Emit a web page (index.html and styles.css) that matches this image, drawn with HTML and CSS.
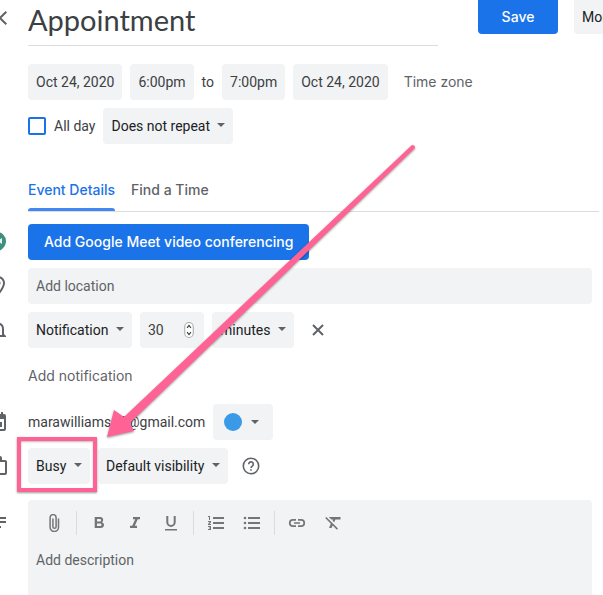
FILE: index.html
```html
<!DOCTYPE html>
<html lang="en">
<head>
<meta charset="utf-8">
<meta name="viewport" content="width=device-width, initial-scale=1">
<title>Appointment</title>
<link rel="stylesheet" href="styles.css">
</head>
<body>
<form class="page">
  <header class="row header">
    <div class="gutter gutter-close"><button type="button" class="icon-button" aria-label="Close"><svg class="icon" viewBox="0 0 24 24"><path d="M19 6.4 17.6 5 12 10.6 6.4 5 5 6.4l5.6 5.600L5 17.600 6.400 19l5.600-5.600 5.600 5.600 1.400-1.400-5.600-5.600z"/></svg></button></div>
    <input class="title" type="text" value="Appointment" aria-label="Title">
    <div class="actions">
      <button type="button" class="primary save">Save</button>
      <button type="button" class="more">More actions</button>
    </div>
  </header>

  <div class="row dates">
    <div class="gutter"></div>
    <div class="fields">
      <button type="button" class="chip">Oct 24, 2020</button>
      <button type="button" class="chip">6:00pm</button>
      <span>to</span>
      <button type="button" class="chip">7:00pm</button>
      <button type="button" class="chip">Oct 24, 2020</button>
      <button type="button" class="text-button zone">Time zone</button>
    </div>
  </div>

  <div class="row repeat">
    <div class="gutter"></div>
    <div class="fields">
      <label class="check"><input type="checkbox">All day</label>
      <span class="select"><select aria-label="Repeat"><option>Does not repeat</option></select></span>
    </div>
  </div>

  <div class="row">
    <div class="gutter"></div>
    <nav class="tabs">
      <a class="tab active" href="#details">Event Details</a>
      <a class="tab" href="#time">Find a Time</a>
    </nav>
  </div>

  <main class="details" id="details">
    <div class="row">
      <div class="gutter"><svg class="icon" viewBox="0 0 24 24"><path fill="#3d8f80" d="M11 2a9 9 0 0 1 9 9c0 4-2.500 7.500-6 9.500V20h-3a9 9 0 0 1 0-18z"/><path fill="#e8f3f1" d="M6 8h7v2l3-2v6l-3-2v2H6z"/></svg></div>
      <div class="fields"><button type="button" class="primary">Add Google Meet video conferencing</button></div>
    </div>

    <div class="row">
      <div class="gutter"><svg class="icon" viewBox="0 0 24 24"><path d="M12 2C8.100 2 5 5.100 5 9c0 5.200 7 13 7 13s7-7.800 7-13c0-3.900-3.100-7-7-7zm0 2a5 5 0 0 1 5 5c0 2.900-2.900 7.200-5 9.900C9.900 16.200 7 11.900 7 9a5 5 0 0 1 5-5z"/><circle cx="12" cy="9" r="2.500"/></svg></div>
      <input class="location" type="text" placeholder="Add location" aria-label="Location">
    </div>

    <div class="row">
      <div class="gutter"><svg class="icon" viewBox="0 0 24 24"><path d="M12 22a2 2 0 0 0 2-2h-4a2 2 0 0 0 2 2zm6-6v-5c0-3.100-1.600-5.600-4.500-6.300V4a1.500 1.500 0 0 0-3 0v.7C7.600 5.400 6 7.900 6 11v5l-2 2v1h16v-1zm-2 1H8v-6c0-2.500 1.500-4.500 4-4.500s4 2 4 4.500z"/></svg></div>
      <div class="fields">
        <span class="select"><select aria-label="Notification type"><option>Notification</option></select></span>
        <span class="amount">
          <input type="text" inputmode="numeric" value="30" aria-label="Notification time">
          <svg class="stepper" viewBox="0 0 9 15"><rect x=".5" y=".5" width="8" height="14" rx="4"/><path d="m2.700 5.500 1.800-2.300 1.800 2.300M2.700 9.500l1.800 2.300 1.800-2.300"/></svg>
        </span>
        <span class="select"><select aria-label="Notification unit"><option>minutes</option></select></span>
        <button type="button" class="icon-button remove" aria-label="Remove notification"><svg viewBox="0 0 12 12"><path d="m1 1 10 10M11 1 1 11"/></svg></button>
      </div>
    </div>

    <div class="row">
      <div class="gutter"></div>
      <div class="fields add"><button type="button" class="text-button">Add notification</button></div>
    </div>

    <div class="row">
      <div class="gutter"><svg class="icon" viewBox="0 0 24 24"><path d="M18 4h-1V2h-2v2H8V2H6v2H5a2 2 0 0 0-2 2v13a2 2 0 0 0 2 2h13a2 2 0 0 0 2-2V6a2 2 0 0 0-2-2zm0 15H5V9h13zM11 12h5v5h-5z"/></svg></div>
      <div class="fields">
        <span>marawilliams10@gmail.com</span>
        <button type="button" class="color" aria-label="Calendar color"><span class="dot"></span><span class="caret"></span></button>
      </div>
    </div>

    <div class="row">
      <div class="gutter"><svg class="icon" viewBox="0 0 24 24"><path d="M14 6V4h-4v2zM4 8v11h15V8zm15-2a2 2 0 0 1 2 2v11a2 2 0 0 1-2 2H4a2 2 0 0 1-2-2V8c0-1.100.9-2 2-2h4V4c0-1.100.9-2 2-2h4a2 2 0 0 1 2 2v2z"/></svg></div>
      <div class="fields">
        <span class="select marked"><select aria-label="Availability"><option>Busy</option></select></span>
        <span class="select"><select aria-label="Visibility"><option>Default visibility</option></select></span>
        <button type="button" class="icon-button help" aria-label="Help"><svg viewBox="0 0 18 18"><circle cx="9" cy="9" r="7.700"/><path d="M6.700 7.200a2.300 2.300 0 1 1 3.800 1.700C9.600 9.600 9 9.900 9 11"/><path d="M9 12.200v1.600"/></svg></button>
      </div>
    </div>

    <div class="row description">
      <div class="gutter"><svg class="icon" viewBox="0 0 24 24"><path d="M4 7h16v2H4zm0 4h16v2H4zm0 5h11v2H4z"/></svg></div>
      <div class="editor">
        <div class="toolbar">
          <button type="button" aria-label="Attach"><svg class="tool" viewBox="0 0 18 18"><path fill="none" stroke="#757575" stroke-width="1.500" d="M13.500 4.500v8.800a4.200 4.200 0 0 1-8.400 0V3.600a3 3 0 0 1 6 0v9.100a1.600 1.600 0 0 1-3.200 0V4.500"/></svg></button>
          <i class="divider"></i>
          <button type="button" aria-label="Bold"><svg class="tool" viewBox="0 0 18 18"><path d="M12 8.300a3 3 0 0 0 1.200-2.400C13.200 4.200 12 3 10.200 3H4.700v11h6c1.900 0 3.300-1.300 3.300-3.100 0-1.200-.8-2.100-2-2.600zM7 5h2.800a1.300 1.300 0 0 1 0 2.600H7zm3.200 7H7V9.400h3.200a1.300 1.300 0 0 1 0 2.600z"/></svg></button>
          <button type="button" aria-label="Italic"><svg class="tool" viewBox="0 0 18 18"><path d="M7 3v2.300h2.200l-3 6.400H4V14h7v-2.300H8.800l3-6.400H14V3z"/></svg></button>
          <button type="button" aria-label="Underline"><svg class="tool" viewBox="0 0 18 18"><path d="M9 13a4.700 4.700 0 0 0 4.700-4.700V2h-2v6.300a2.700 2.700 0 0 1-5.400 0V2h-2v6.300A4.700 4.700 0 0 0 9 13zm-6 2v1.600h12V15z"/></svg></button>
          <i class="divider"></i>
          <button type="button" aria-label="Numbered list"><svg class="tool" viewBox="0 0 18 18"><path d="M6 3h11v2H6zm0 5h11v2H6zm0 5h11v2H6zM1 2h2v4H2V3H1zm0 5h3v1.500L2.500 10H4v1H1v-1l1.700-2H1zm0 5h3v4H1v-1h2v-.5H2v-1h1V13H1z"/></svg></button>
          <button type="button" aria-label="Bulleted list"><svg class="tool" viewBox="0 0 18 18"><path d="M5 3h12v2H5zm0 5h12v2H5zm0 5h12v2H5z"/><circle cx="2" cy="4" r="1.300"/><circle cx="2" cy="9" r="1.300"/><circle cx="2" cy="14" r="1.300"/></svg></button>
          <i class="divider"></i>
          <button type="button" aria-label="Link"><svg class="tool" viewBox="0 0 18 18"><path d="M8 5H4.900a4 4 0 0 0 0 8H8v-1.700H4.900a2.300 2.300 0 0 1 0-4.600H8zm2 0v1.700h3.100a2.300 2.300 0 0 1 0 4.600H10V13h3.100a4 4 0 0 0 0-8zM6 8.200v1.600h6V8.200z"/></svg></button>
          <button type="button" aria-label="Remove formatting"><svg class="tool" viewBox="0 0 18 18"><path d="M5 3v.2L7.300 5.500H9l-.4 1.200L10.200 8.300l1.200-2.800h5.100V3zM2.300 3 1.200 4.100l5.600 5.600L5 14h2.500l1.200-2.500 4.200 4.200L14 14.600z"/></svg></button>
        </div>
        <textarea placeholder="Add description" aria-label="Description"></textarea>
      </div>
    </div>
  </main>
  <svg class="arrow" viewBox="0 0 330 310" aria-hidden="true"><path d="M312 5Q315 5 315 8L30 283 34 291 7 297 14 270 24 277Z"/></svg>
</form>
</body>
</html>
```
FILE: styles.css
```css
* { box-sizing: border-box; }
body {
  margin: 0;
  overflow: hidden;
  background: #fff;
  color: #3c4043;
  font: 14px/20px Roboto, sans-serif;
}
button, input, select, textarea {
  margin: 0;
  border: 0;
  border-radius: 4px;
  color: inherit;
  font: inherit;
}
button { padding: 0; background: none; white-space: nowrap; }
svg { display: block; }
.page { position: relative; }
.row { display: grid; grid-template-columns: 28px minmax(0, 1fr); }
.gutter {
  display: flex;
  align-items: center;
  justify-content: flex-end;
  height: 36px;
  padding-right: 18px;
}
.gutter-close { padding-right: 16px; }
.icon { width: 24px; height: 24px; flex: none; fill: #5f6368; }
.fields { display: flex; align-items: center; gap: 8px; min-height: 36px; }

.header { grid-template-columns: 28px minmax(0, 410px) minmax(165px, 1fr); }
.title {
  width: 100%;
  height: 46px;
  padding: 0 0 6px;
  border-bottom: 1px solid #dadce0;
  border-radius: 0;
  background: none;
  font: 29px/36px Lato, sans-serif;
}
.actions { display: flex; gap: 16px; padding-left: 40px; overflow: hidden; }
.primary {
  height: 36px;
  padding: 0 16px;
  background: #1a73e8;
  color: #fff;
  font-family: Inter, sans-serif;
  font-weight: 500;
}
.save { flex: none; width: 80px; height: 34px; border-radius: 0 0 4px 4px; }
.more { height: 34px; padding: 0 8px; border-radius: 0 0 4px 4px; background: #f1f3f4; color: #202124; }

.dates { padding-top: 18px; }
.chip { height: 36px; padding: 0 8px; background: #f1f3f4; }
.text-button { color: #5f6368; font-family: Inter, sans-serif; }
.zone { margin-left: 8px; }
.repeat { padding-top: 8px; }
.check { display: flex; align-items: center; gap: 8px; }
.check input {
  appearance: none;
  width: 18px;
  height: 18px;
  border: 2px solid #1a73e8;
  border-radius: 2px;
}
.select { position: relative; display: flex; }
select {
  appearance: none;
  height: 36px;
  padding: 0 23px 0 8px;
  background: #f1f3f4;
  color: #202124;
}
.select::after, .caret {
  width: 0;
  border: 4px solid transparent;
  border-top-color: #5f6368;
  border-bottom: 0;
  content: "";
}
.select::after { position: absolute; top: 15px; right: 8px; pointer-events: none; }

.tabs { display: flex; gap: 16px; margin: 26px 4px 0 0; border-bottom: 1px solid #dadce0; }
.tab {
  padding: 10px 0 11px;
  color: #5f6368;
  font-family: Inter, sans-serif;
  font-weight: 500;
  text-decoration: none;
}
.active {
  position: relative;
  color: #1a73e8;
}
.active::after {
  position: absolute;
  right: 0;
  bottom: 0;
  left: 0;
  height: 3px;
  border-radius: 3px 3px 0 0;
  background: #4285f4;
  content: "";
}
.details { display: flex; flex-direction: column; gap: 8px; padding: 12px 11px 0 0; }
.location { width: 100%; height: 36px; padding: 0 8px; background: #f1f3f4; }
::placeholder { color: #5f6368; opacity: 1; }
.amount {
  display: flex;
  align-items: center;
  width: 64px;
  height: 36px;
  padding: 0 10px 0 8px;
  border-radius: 4px;
  background: #f1f3f4;
}
.amount input { flex: 1; width: 0; padding: 0; background: none; }
.stepper { width: 10px; height: 16px; fill: #fff; stroke: #aaa; }
.stepper path { fill: none; stroke: #333; }
.remove { margin-left: 10px; }
.remove svg { width: 12px; height: 12px; stroke: #5f6368; stroke-width: 2; }
.add { min-height: 40px; }
.color {
  display: flex;
  align-items: center;
  gap: 9px;
  width: 60px;
  height: 36px;
  padding: 0 11px;
  background: #f1f3f4;
}
.dot { width: 18px; height: 18px; border-radius: 50%; background: #3b9ae8; }
.marked::before {
  position: absolute;
  z-index: 1;
  inset: -11px -7px -8px -11px;
  border: 4px solid #ff6396;
  box-shadow: 0 1px 2px #0006, inset 0 1px 2px #0004;
  content: "";
  pointer-events: none;
}
.help { margin-left: 6px; }
.help svg { width: 18px; height: 18px; fill: none; stroke: #5f6368; stroke-width: 1.6; }
.description { padding-top: 8px; }
.description .gutter { height: 44px; }
.editor { border-radius: 4px 4px 0 0; background: #f1f3f4; }
.toolbar { display: flex; align-items: center; height: 46px; padding: 0 8px; }
.toolbar button { display: grid; place-items: center; width: 36px; height: 36px; }
.tool { width: 18px; height: 18px; fill: #757575; }
.divider { width: 1px; height: 24px; margin: 0 4px; background: #dadce0; }
textarea { display: block; width: 100%; height: 60px; padding: 4px 8px; background: none; resize: none; }
.arrow {
  position: absolute;
  top: 140px;
  left: 100px;
  width: 330px;
  height: 310px;
  fill: #ff6396;
  filter: drop-shadow(0 1px 1px #0006);
  pointer-events: none;
}
```
